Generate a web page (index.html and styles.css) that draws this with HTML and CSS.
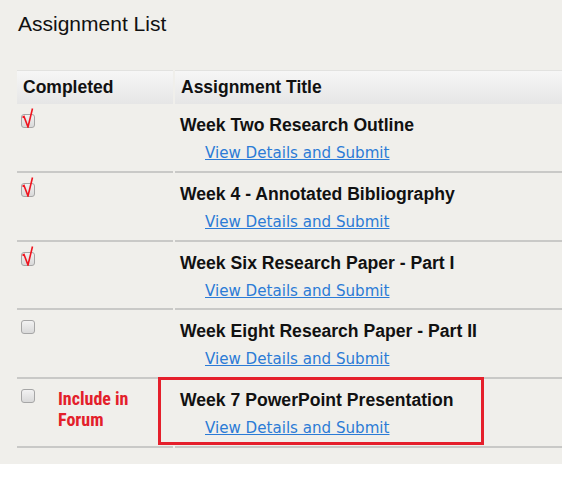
FILE: index.html
```html
<!DOCTYPE html>
<html lang="en">
<head>
    <meta charset="UTF-8">
    <title>Assignment List</title>
    <link rel="stylesheet" href="styles.css">
</head>
<body>
    <div class="page">
        <h1 class="page-title">Assignment List</h1>

        <table class="assignments">
            <thead>
                <tr>
                    <th class="col-done">Completed</th>
                    <th class="col-title">Assignment Title</th>
                </tr>
            </thead>
            <tbody>
                <tr>
                    <td class="col-done"><span class="box checked"></span></td>
                    <td class="col-title">
                        <div class="task-name">Week Two Research Outline</div>
                        <a class="task-link" href="#">View Details and Submit</a>
                    </td>
                </tr>
                <tr>
                    <td class="col-done"><span class="box checked"></span></td>
                    <td class="col-title">
                        <div class="task-name">Week 4 - Annotated Bibliography</div>
                        <a class="task-link" href="#">View Details and Submit</a>
                    </td>
                </tr>
                <tr>
                    <td class="col-done"><span class="box checked"></span></td>
                    <td class="col-title">
                        <div class="task-name">Week Six Research Paper - Part I</div>
                        <a class="task-link" href="#">View Details and Submit</a>
                    </td>
                </tr>
                <tr>
                    <td class="col-done"><span class="box"></span></td>
                    <td class="col-title">
                        <div class="task-name">Week Eight Research Paper - Part II</div>
                        <a class="task-link" href="#">View Details and Submit</a>
                    </td>
                </tr>
                <tr>
                    <td class="col-done">
                        <div class="done-cell">
                            <span class="box"></span>
                            <span class="note">Include in<br>Forum</span>
                        </div>
                    </td>
                    <td class="col-title">
                        <div class="task-name">Week 7 PowerPoint Presentation</div>
                        <a class="task-link" href="#">View Details and Submit</a>
                    </td>
                </tr>
            </tbody>
        </table>

        <!-- 标注框 -->
        <div class="highlight"></div>
    </div>
</body>
</html>
```

FILE: styles.css
```css
* {
    margin: 0;
    padding: 0;
    box-sizing: border-box;
}

body {
    background: #fff;
    font-family: 'Liberation Sans', Arial, sans-serif;
    overflow: hidden;
}

.page {
    position: relative;
    background: #f0efeb;
    padding: 12px 0 16px 17px;
    overflow: hidden;
}

.page-title {
    font-size: 21px;
    font-weight: normal;
    line-height: 24px;
    color: #111;
    padding-left: 1px;
    margin-bottom: 34px;
}

/* 表格 */
.assignments {
    width: 620px;
    border-collapse: separate;
    border-spacing: 2px 0;
    margin-left: -2px;
}

.assignments th {
    height: 34px;
    text-align: left;
    font-size: 17.5px;
    font-weight: bold;
    color: #111;
    padding: 0 6px;
    border-top: 1px solid #e2e2e0;
    background: linear-gradient(#f6f6f6, #e6e6e6);
}

.assignments td {
    vertical-align: top;
    padding: 10px 0 6.75px;
    border-bottom: 2px solid #c9c9c7;
}

.col-done {
    width: 156px;
}

td.col-done {
    padding-left: 4px;
}

td.col-title {
    padding-left: 5px;
}

.task-name {
    font-size: 17.6px;
    font-weight: bold;
    line-height: 22px;
    color: #111;
    margin-bottom: 6px;
}

.task-link {
    display: block;
    margin-left: 25px;
    font-family: 'DejaVu Sans', Verdana, sans-serif;
    font-size: 15.1px;
    line-height: 22px;
    color: #2b7bd6;
    text-decoration: underline;
}

/* 复选框 */
.box {
    position: relative;
    display: block;
    width: 14px;
    height: 14px;
    border: 1px solid #a6a6a6;
    border-radius: 3px;
    background: linear-gradient(#f2f2f2, #d9d9d9);
}

.box.checked::after {
    content: '';
    position: absolute;
    left: 0;
    top: -7px;
    width: 12px;
    height: 20px;
    background: url("data:image/svg+xml;utf8,<svg xmlns='http://www.w3.org/2000/svg' width='12' height='20'><polyline points='0.5,9.5 2,8.5 6,19 10.5,0.5' fill='none' stroke='%23f0141e' stroke-width='1.6'/></svg>") no-repeat;
}

.done-cell {
    display: flex;
    gap: 23px;
}

.note {
    font-family: 'Liberation Sans Narrow', 'Roboto', sans-serif;
    font-stretch: condensed;
    font-weight: bold;
    font-size: 18px;
    line-height: 21px;
    color: #e3202a;
    margin-top: -1px;
}

/* 红色标注 */
.highlight {
    position: absolute;
    left: 158px;
    top: 377px;
    width: 326px;
    height: 68px;
    border: 3px solid #e51f2b;
}
```
